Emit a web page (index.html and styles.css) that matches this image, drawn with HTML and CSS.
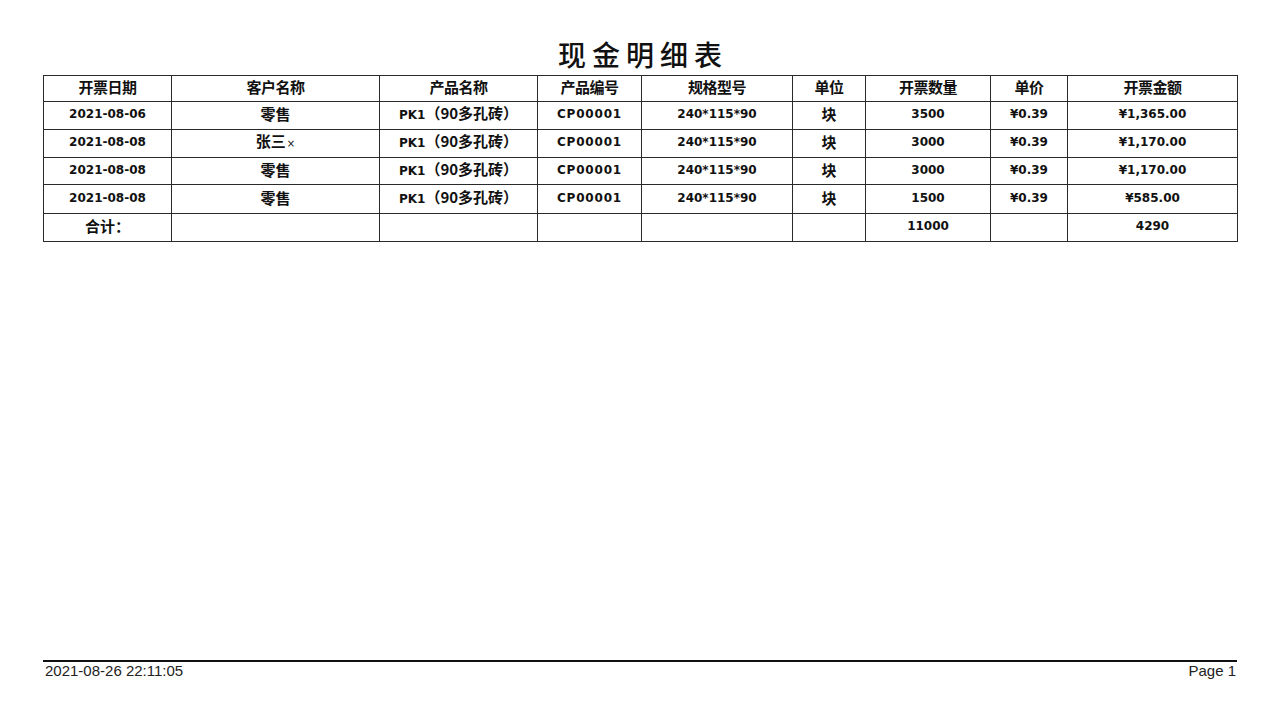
FILE: index.html
```html
<!DOCTYPE html>
<html lang="zh-CN">
<head>
<meta charset="utf-8">
<title>现金明细表</title>
<link rel="stylesheet" href="styles.css">
</head>
<body>
<div class="page">
  <h1 class="title">现金明细表</h1>
  <table class="report">
    <colgroup>
      <col class="c1"><col class="c2"><col class="c3"><col class="c4"><col class="c5"><col class="c6"><col class="c7"><col class="c8"><col class="c9">
    </colgroup>
    <thead>
      <tr class="head">
        <th>开票日期</th><th>客户名称</th><th>产品名称</th><th>产品编号</th><th>规格型号</th><th>单位</th><th>开票数量</th><th>单价</th><th>开票金额</th>
      </tr>
    </thead>
    <tbody>
      <tr class="r28">
        <td>2021-08-06</td><td class="cjk">零售</td><td>PK1<span class="cjk">（90多孔砖）</span></td><td class="code">CP00001</td><td>240*115*90</td><td class="cjk">块</td><td>3500</td><td>¥0.39</td><td>¥1,365.00</td>
      </tr>
      <tr class="r28">
        <td>2021-08-08</td><td class="cjk">张三<span class="x">×</span></td><td>PK1<span class="cjk">（90多孔砖）</span></td><td class="code">CP00001</td><td>240*115*90</td><td class="cjk">块</td><td>3000</td><td>¥0.39</td><td>¥1,170.00</td>
      </tr>
      <tr class="r27">
        <td>2021-08-08</td><td class="cjk">零售</td><td>PK1<span class="cjk">（90多孔砖）</span></td><td class="code">CP00001</td><td>240*115*90</td><td class="cjk">块</td><td>3000</td><td>¥0.39</td><td>¥1,170.00</td>
      </tr>
      <tr class="r29">
        <td>2021-08-08</td><td class="cjk">零售</td><td>PK1<span class="cjk">（90多孔砖）</span></td><td class="code">CP00001</td><td>240*115*90</td><td class="cjk">块</td><td>1500</td><td>¥0.39</td><td>¥585.00</td>
      </tr>
      <tr class="r28">
        <td class="cjk">合计：</td><td></td><td></td><td></td><td></td><td></td><td>11000</td><td></td><td>4290</td>
      </tr>
    </tbody>
  </table>
  <div class="footer">
    <span>2021-08-26 22:11:05</span>
    <span>Page 1</span>
  </div>
</div>
</body>
</html>
```

FILE: styles.css
```css
* { box-sizing: border-box; }
html, body { margin: 0; padding: 0; background: #fff; }
body {
  font-family: "DejaVu Sans", "Noto Sans CJK SC", sans-serif;
  color: #111;
}
.page {
  width: 1280px;
  height: 720px;
  padding: 0 43px;
  display: flex;
  flex-direction: column;
}
.title {
  margin: 0;
  height: 75px;
  padding-top: 36px;
  line-height: 36px;
  text-align: center;
  font-family: "Noto Sans CJK SC", sans-serif;
  font-weight: 500;
  font-size: 28px;
  letter-spacing: 6px;
  text-indent: 6px;
  color: #111;
}
.report {
  width: 1194px;
  border-collapse: collapse;
  table-layout: fixed;
  border: 1px solid #2a2a2a;
}
.c1 { width: 128px; }
.c2 { width: 208px; }
.c3 { width: 158px; }
.c4 { width: 104px; }
.c5 { width: 151px; }
.c6 { width: 73px; }
.c7 { width: 125px; }
.c8 { width: 77px; }
.c9 { width: 170px; }
.report th, .report td {
  border: 1px solid #2a2a2a;
  padding: 0 0 3px 0;
  text-align: center;
  vertical-align: middle;
  white-space: nowrap;
  font-size: 12px;
  line-height: 16px;
  font-weight: bold;
  color: #111;
}
.report th {
  font-family: "Noto Sans CJK SC", sans-serif;
  font-size: 15px;
  letter-spacing: -0.5px;
}
.head { height: 26px; }
.r27 { height: 27px; }
.r28 { height: 28px; }
.r29 { height: 29px; }
.cjk {
  font-family: "Noto Sans CJK SC", sans-serif;
  font-size: 15px;
  font-weight: bold;
}
.report td.cjk { font-size: 15px; }
.code { letter-spacing: 0.8px; }
.x {
  font-family: "DejaVu Sans", sans-serif;
  font-size: 10px;
  font-weight: normal;
  margin-left: 1px;
}
.footer {
  margin-top: auto;
  height: 60px;
  border-top: 2px solid #111;
  display: flex;
  justify-content: space-between;
  padding: 0 1px 0 2px;
  font-family: "Liberation Sans", sans-serif;
  font-size: 15px;
  line-height: 18px;
  color: #222;
}
```
